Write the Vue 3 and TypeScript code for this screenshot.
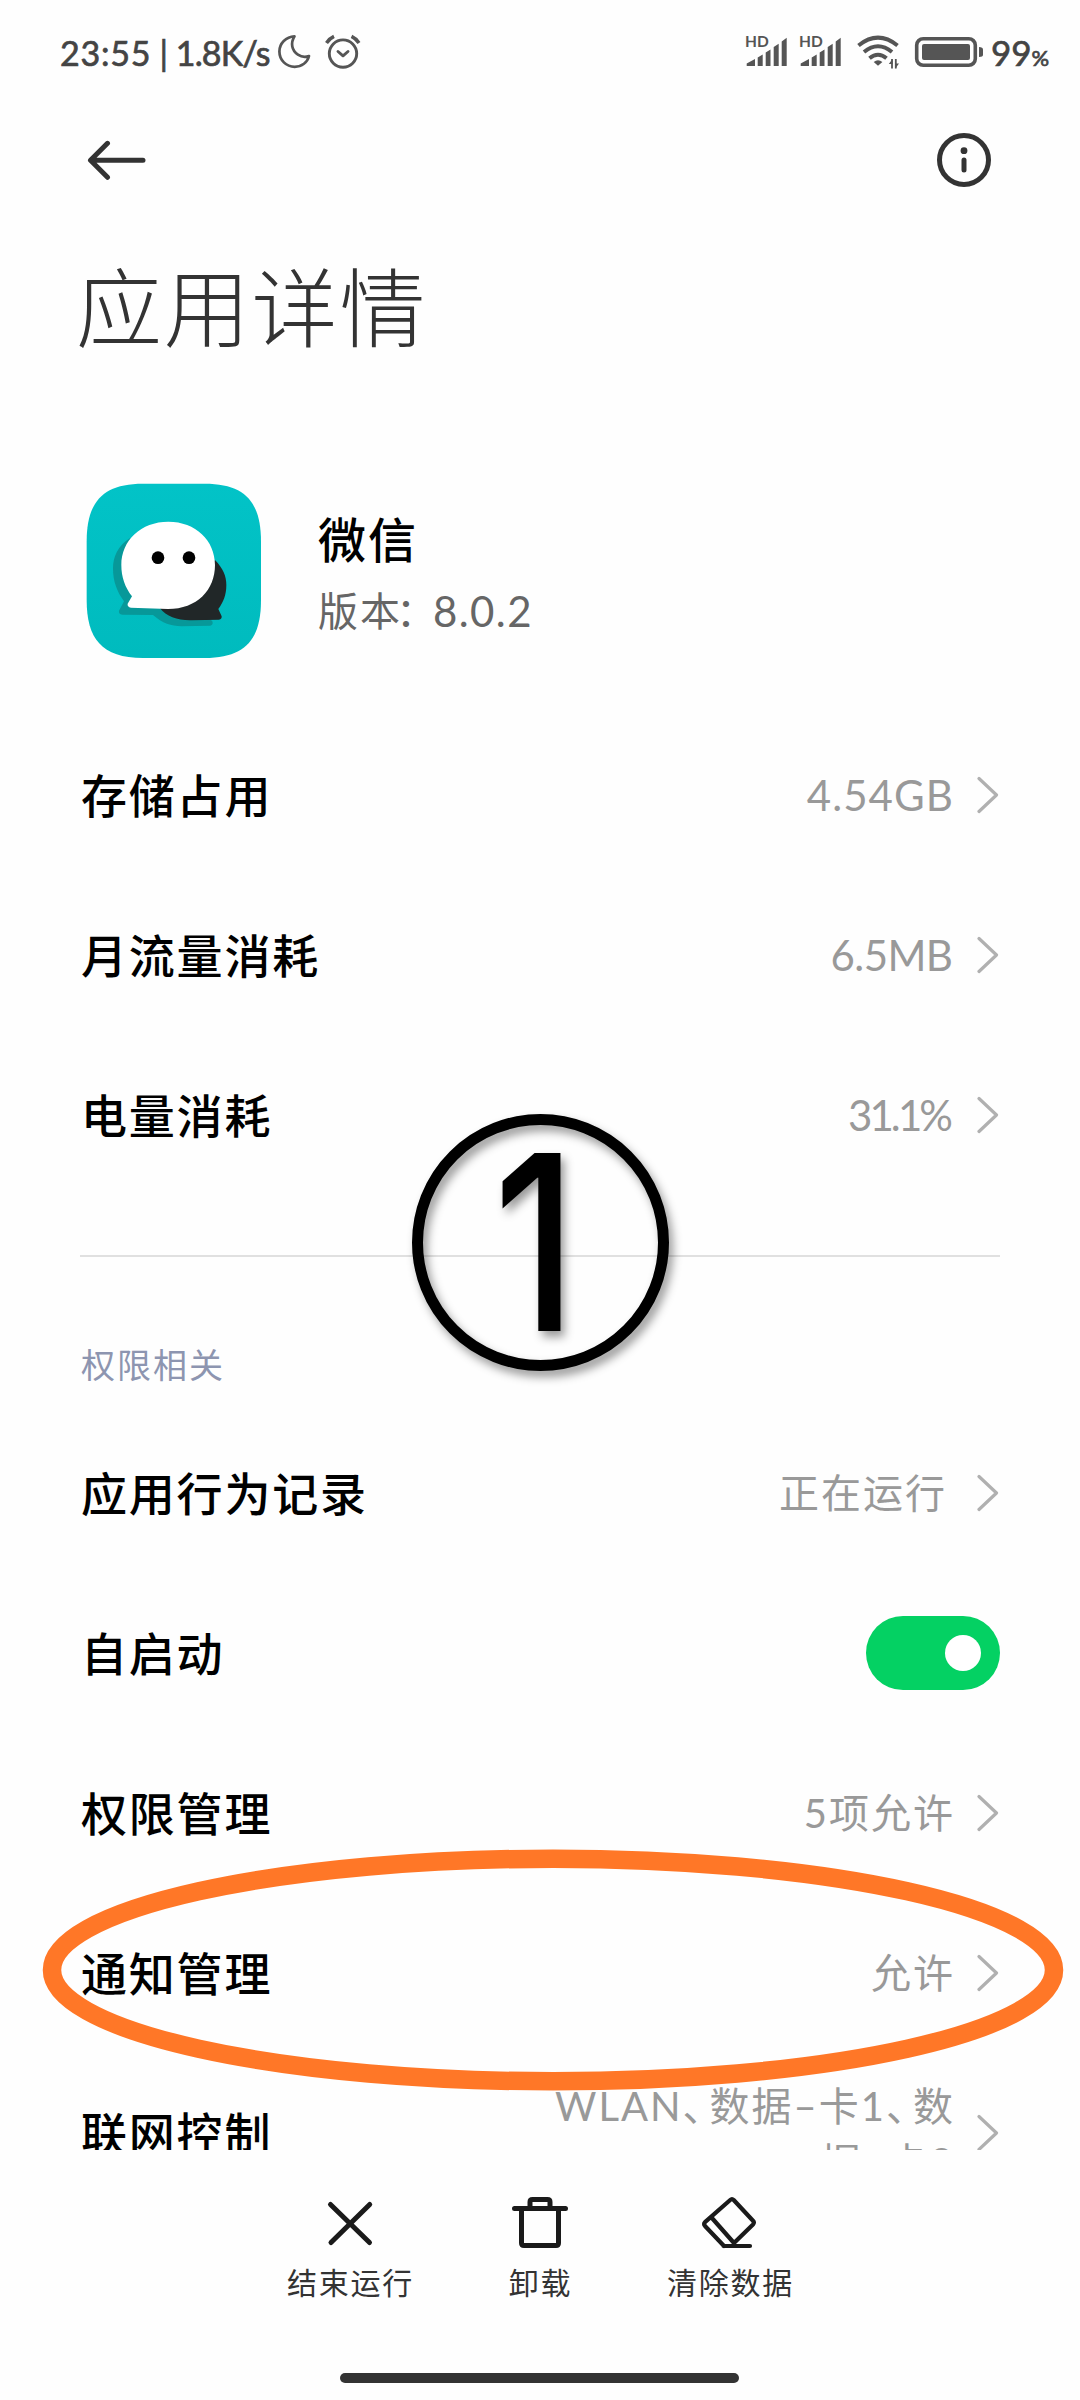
<script setup lang="ts">
interface Row {
  label: string
  value?: string
  kind: 'link' | 'pending' | 'switch' | 'multi'
  tracking?: number
}

const usageRows: Row[] = [
  { label: '存储占用', value: '4.54GB', kind: 'link', tracking: 1.1 },
  { label: '月流量消耗', value: '6.5MB', kind: 'link', tracking: -0.6 },
  { label: '电量消耗', value: '31.1%', kind: 'link', tracking: -2.9 },
]

const permissionRows: Row[] = [
  { label: '应用行为记录', value: '正在运行', kind: 'pending' },
  { label: '自启动', kind: 'switch' },
  { label: '权限管理', value: '5项允许', kind: 'link' },
  { label: '通知管理', value: '允许', kind: 'link' },
  { label: '联网控制', value: 'WLAN、数据–卡1、数\n据–卡2', kind: 'multi' },
]

// Enumeration commas are set tighter than the characters around them.
const segments = (text = '') => text.split(/(、)/)

const trackingStyle = (tracking = 0) => ({
  letterSpacing: `${tracking}px`,
  marginRight: `${24 - tracking}px`,
})
</script>

<template>
  <div class="screen">
    <header class="status">
      <span class="clock">23:55<b>|</b><em>1.8K/s</em></span>
      <svg class="moon" width="34" height="36" viewBox="277 34 34 36" fill="none" stroke="#555" stroke-width="2.7" stroke-linejoin="round">
        <path d="M294.5 36.3C286 36.7 279.4 43.200 279.400 51.500C279.400 60.100 286.200 66.800 294.700 66.800C301.800 66.800 307.500 62.400 309 56C305.500 57.400 301.400 57 297.900 54.700C291.800 50.700 290.200 43.200 294.500 36.300Z" />
      </svg>
      <svg class="alarm" width="38" height="36" viewBox="324 34 38 36" fill="none" stroke="#555" stroke-width="2.900" stroke-linecap="round" stroke-linejoin="round">
        <circle cx="343" cy="53.600" r="13.700" />
        <path d="M338 51.500L343 55.800L348 51.500" />
        <path d="M326.500 42.900Q329.500 38.500 334 36.400M359 42.900Q356 38.500 351.500 36.400" stroke-linecap="butt" stroke-width="3.500" />
      </svg>
      <div class="grow"></div>
      <div v-for="n in 2" :key="n" class="signal">
        <span class="hd">HD</span>
        <svg width="42" height="30" viewBox="0 0 42 30" fill="#555">
          <path d="M0.700 29V26.500L9 22V29ZM11.700 29V20.500L16.700 17.500V29ZM19.700 29V15.500L24.500 12.600V29ZM27.700 29V10L32.700 6.800V29ZM35.700 29V4.500L40.700 0.700V29Z" />
        </svg>
      </div>
      <svg class="wifi" width="44" height="36" viewBox="856 35 44 36" fill="none" stroke="#555" stroke-width="4">
        <path d="M858.500 46.500Q878 30.800 897.500 46.500" />
        <path d="M864 53Q878 41.500 892 53" />
        <path d="M869.500 59.200Q878 52.300 886.500 59.200" />
        <path d="M878 66.800L873.700 63Q878 59.600 882.400 63Z" fill="#555" stroke="none" />
        <path d="M892 60V69.500M895.800 60V69.500" stroke-width="1.800" />
        <path d="M892.500 60L888.800 65H892.500ZM895.300 69.500L899 64.500H895.300Z" fill="#555" stroke="none" />
      </svg>
      <svg class="battery" width="69" height="32" viewBox="914 36 69 32">
        <rect x="916.700" y="38.700" width="58.600" height="26.600" rx="6.500" fill="none" stroke="#555" stroke-width="3.600" />
        <rect x="922" y="44" width="48" height="16" rx="2" fill="#555" />
        <path d="M979 47Q983 47.300 983 49.500V55Q983 56.800 979 57Z" fill="#555" />
      </svg>
      <span class="percent">99<small>%</small></span>
    </header>

    <nav class="bar">
      <svg width="60" height="42" viewBox="87 139 60 42" fill="none" stroke="#333" stroke-width="5" stroke-linecap="round" stroke-linejoin="round">
        <path d="M143 160.300H91M107.500 143.300L90.500 160.300L107.500 177.300" />
      </svg>
      <svg width="56" height="56" viewBox="936 132 56 56" fill="none" stroke="#333" stroke-width="5">
        <circle cx="964" cy="160" r="24.500" />
        <circle cx="964" cy="150.700" r="3.400" fill="#333" stroke="none" />
        <path d="M964 160V170" stroke-linecap="round" />
      </svg>
    </nav>

    <h1 class="title">应用详情</h1>

    <section class="app">
      <svg width="176" height="176" viewBox="49 69 528 528">
        <defs>
          <linearGradient id="tile" x1="0" y1="0" x2="0" y2="1">
            <stop offset="0" stop-color="#02c3c7" />
            <stop offset="1" stop-color="#00bbbe" />
          </linearGradient>
        </defs>
        <path fill="url(#tile)" d="M220 71H405C530 71 574 130 574 245V420C574 535 530 594 405 594H220C95 594 51 535 51 420V245C51 130 95 71 220 71Z" />
        <path fill="#079899" d="M180 235C145 258 130 290 130 325C130 365 142 395 163 424L148 452Q146 462 158 464L250 465C278 490 305 498 335 499L422 497Q432 494 428 484L380 440Z" />
        <path fill="#212728" d="M436 300C460 325 470 348 470 375C470 405 461 427 446 447L456 469Q457 478 448 479L365 481C325 482 290 470 271 445L380 380Z" />
        <path fill="#fff" d="M296 185C378 185 436 241 436 315C436 390 382 447 295 447L184 443Q172 440 174 431L187 409C166 382 155 351 155 315C155 241 214 185 296 185Z" />
        <circle cx="265" cy="293" r="19" />
        <circle cx="358" cy="293" r="19" />
      </svg>
      <div class="app-text">
        <div class="app-name">微信</div>
        <div class="app-version"><span>版本</span><span class="colon">：</span><span class="num">8.0.2</span></div>
      </div>
    </section>

    <main class="list">
      <div v-for="row in usageRows" :key="row.label" class="row">
        <span class="label">{{ row.label }}</span>
        <span class="value num" :style="trackingStyle(row.tracking)">{{ row.value }}</span>
        <svg class="chevron" width="22" height="40" viewBox="0 0 22 40"><path d="M2 3.500L19.500 20L2 36.500" /></svg>
      </div>

      <div class="divider"></div>
      <h2 class="group">权限相关</h2>

      <div v-for="row in permissionRows" :key="row.label" class="row">
        <span class="label">{{ row.label }}</span>
        <div v-if="row.kind === 'switch'" class="switch"><i></i></div>
        <template v-else>
          <span class="value" :class="row.kind"><span v-for="(part, i) in segments(row.value)" :key="i" :class="{ comma: part === '、' }">{{ part }}</span></span>
          <svg class="chevron" width="22" height="40" viewBox="0 0 22 40"><path d="M2 3.500L19.500 20L2 36.500" /></svg>
        </template>
      </div>
    </main>

    <footer class="actions">
      <div class="action">
        <svg width="60" height="56" viewBox="320 2195 60 56">
          <path d="M330.500 2204.500L369.500 2242.500M369.700 2204.500L331 2242.500" />
        </svg>
        <span>结束运行</span>
      </div>
      <div class="action">
        <svg width="60" height="56" viewBox="510 2195 60 56">
          <path d="M514.500 2208.500H565.500M530 2208V2202Q530 2199.500 532.500 2199.500H547.500Q550 2199.500 550 2202V2208M521.500 2209V2243Q521.500 2245.500 524 2245.500H556Q558.500 2245.500 558.500 2243V2209" />
        </svg>
        <span>卸载</span>
      </div>
      <div class="action">
        <svg width="60" height="56" viewBox="700 2195 60 56" class="fine">
          <path d="M730.200 2200Q732 2198.300 733.700 2200L753 2220.800Q754.700 2222.600 753 2224.500L734 2243M724 2246L705 2226Q703.300 2224 705 2222.200L730.200 2200M711.500 2217.500L734 2243M723.500 2246H750" />
        </svg>
        <span>清除数据</span>
      </div>
    </footer>
    <div class="home"><i></i></div>

    <div class="step"><span>1</span></div>
    <svg class="highlight" width="1024" height="244" viewBox="41 1848 1024 244">
      <ellipse cx="553" cy="1970" rx="501" ry="111.300" fill="none" stroke="#ff7727" stroke-width="18.500" />
    </svg>
  </div>
</template>

<style>
body {
  margin: 0;
  background: #fefefe;
}
</style>

<style scoped>
.screen {
  position: relative;
  display: flex;
  flex-direction: column;
  box-sizing: border-box;
  width: 1080px;
  height: 2400px;
  overflow: hidden;
  background: #fefefe;
  color: #000;
  font-family: Lato, "Noto Sans CJK SC", sans-serif;
}

.status {
  display: flex;
  align-items: center;
  flex: none;
  height: 104px;
  padding: 0 30px 0 60px;
  box-sizing: border-box;
  color: #444;
}
.clock {
  width: 217px;
  font-size: 34px;
  letter-spacing: 0.8px;
  white-space: nowrap;
  -webkit-text-stroke: 0.7px #444;
}
.clock b { margin: 0 7px 0 8px; font-weight: 400; }
.clock em { font-style: normal; letter-spacing: -0.800px; }
.alarm { margin-left: 13px; }
.grow { flex: 1; }
.signal {
  position: relative;
  width: 42px;
  height: 30px;
  margin: 0 12px 0 0;
}
.signal svg { display: block; }
.hd {
  position: absolute;
  left: -1px;
  top: -4px;
  font: 700 15.500px/16px Lato, sans-serif;
  color: #555;
}
.wifi { margin-left: 2px; }
.battery { margin-left: 14px; }
.percent {
  width: 59px;
  margin-left: 8px;
  font-size: 35px;
  white-space: nowrap;
  -webkit-text-stroke: 0.7px #444;
}
.percent small { font-size: 22px; }

.bar {
  display: flex;
  flex: none;
  align-items: center;
  justify-content: space-between;
  height: 112px;
  padding: 0 88px 0 87px;
}

.title {
  flex: none;
  height: 184px;
  margin: 0;
  padding-left: 76px;
  font-size: 86px;
  font-weight: 300;
  line-height: 184px;
  letter-spacing: 1.800px;
  color: #333;
}

.app {
  display: flex;
  flex: none;
  align-items: flex-start;
  height: 315px;
  padding: 83px 0 0 86px;
  box-sizing: border-box;
}
.app-text { margin-left: 56px; padding-top: 21px; }
.app-name {
  height: 71px;
  font-size: 48px;
  font-weight: 500;
  line-height: 72px;
  letter-spacing: 2px;
}
.app-version {
  display: flex;
  height: 72px;
  font-size: 40px;
  line-height: 72px;
  letter-spacing: 2px;
  color: #666;
}
.colon { margin: 0 -5px 0 -6px; }
.app-version .num { letter-spacing: 1.400px; }

.list {
  flex: none;
  height: 1435px;
  padding: 0 80px;
  overflow: hidden;
}
.row {
  display: flex;
  align-items: center;
  height: 160px;
}
.label {
  flex: 1;
  padding: 0 0 5px 1px;
  font-size: 46px;
  font-weight: 500;
  letter-spacing: 1.800px;
}
.value {
  margin-right: 22px;
  font-size: 40px;
  line-height: 56px;
  letter-spacing: 2px;
  text-align: right;
  color: #999;
}
.value.pending { margin-right: 30px; }
.value.multi { padding-top: 1px; white-space: pre; }
.comma {
  letter-spacing: 7px;
  font-feature-settings: "halt";
}
.num { font-size: 42px; }
.chevron {
  margin-right: 1px;
  fill: none;
  stroke: #b0b0b0;
  stroke-width: 3.200;
  stroke-linecap: round;
  stroke-linejoin: round;
}
.divider {
  height: 2px;
  margin-top: 60px;
  background: #e0e0e0;
}
.group {
  height: 156px;
  margin: 0;
  padding: 0 0 0 1px;
  box-sizing: border-box;
  font-size: 34px;
  font-weight: 400;
  line-height: 215px;
  letter-spacing: 2px;
  color: #8d95b0;
}
.switch {
  display: flex;
  align-items: center;
  justify-content: flex-end;
  width: 134px;
  height: 74px;
  padding-right: 19px;
  box-sizing: border-box;
  border-radius: 37px;
  background: #04d163;
}
.switch i {
  width: 36px;
  height: 36px;
  border-radius: 50%;
  background: #fff;
}

.actions {
  display: flex;
  flex: none;
  justify-content: center;
  height: 196px;
  padding-top: 45px;
  box-sizing: border-box;
}
.action {
  display: flex;
  flex-direction: column;
  align-items: center;
  width: 190px;
  font-size: 30px;
  line-height: 44px;
  letter-spacing: 1.800px;
  color: #333;
}
.action svg {
  fill: none;
  stroke: #1a1a1a;
  stroke-width: 5;
  stroke-linecap: round;
  stroke-linejoin: round;
}
.action svg.fine { stroke-width: 4.200; }
.action span { margin-top: 9px; padding-left: 1px; }
.home {
  display: flex;
  justify-content: center;
  padding: 27px 1px 0 0;
}
.home i {
  width: 399px;
  height: 10px;
  border-radius: 5px;
  background: #333;
}

.step {
  position: absolute;
  left: 411.500px;
  top: 1113.500px;
  display: flex;
  align-items: center;
  justify-content: center;
  width: 257px;
  height: 257px;
  box-sizing: border-box;
  border: 11.700px solid #000;
  border-radius: 50%;
  filter: drop-shadow(4px 6px 5px rgba(0, 0, 0, 0.4));
}
.step span {
  font: 500 245px/245px Inter, sans-serif;
  transform: translateX(-5px) scaleX(0.82);
}
.highlight {
  position: absolute;
  left: 41px;
  top: 1848px;
}
</style>
